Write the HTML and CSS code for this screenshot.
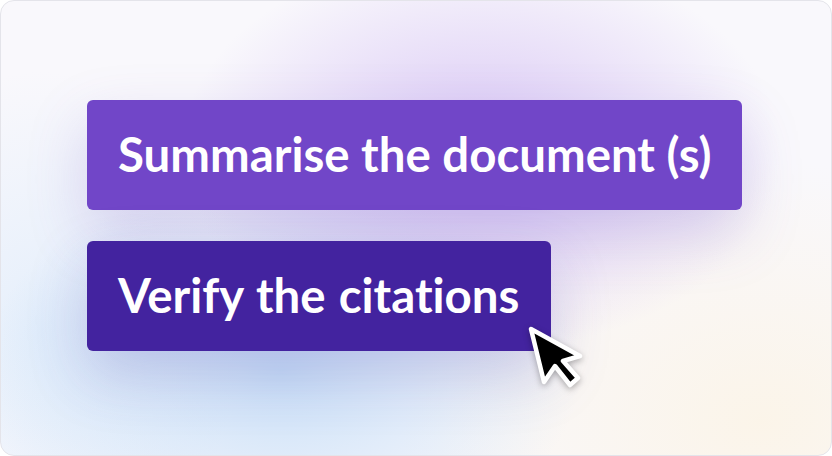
FILE: index.html
```html
<!DOCTYPE html>
<html>
<head>
<meta charset="utf-8">
<link rel="stylesheet" href="styles.css">
</head>
<body>
<div class="card">
  <div class="actions">
    <div class="btn btn-primary">Summarise the document (s)</div>
    <div class="btn btn-dark">Verify the citations</div>
  </div>
  <svg class="cursor" width="66" height="72" viewBox="0 0 66 72">
    <path d="M9 9 L22 62 L33 46 L48 65 L56 58 L41 41 L58 36 Z" fill="#000" stroke="#fff" stroke-width="4.5" stroke-linejoin="round"/>
  </svg>
</div>
</body>
</html>
```
FILE: styles.css
```css
html, body {
  margin: 0;
  padding: 0;
  width: 832px;
  height: 456px;
  background: #ffffff;
  overflow: hidden;
}
.card {
  position: relative;
  box-sizing: border-box;
  width: 832px;
  height: 456px;
  border: 1px solid #e4e4ea;
  border-radius: 14px;
  overflow: hidden;
  background:
    radial-gradient(ellipse 300px 200px at 480px 150px, rgba(195,165,240,0.6), rgba(195,165,240,0) 100%),
    radial-gradient(ellipse 300px 190px at 280px 370px, rgba(170,208,245,0.6), rgba(170,208,245,0) 100%),
    radial-gradient(ellipse 200px 260px at 40px 330px, rgba(205,228,250,0.45), rgba(205,228,250,0) 100%),
    radial-gradient(ellipse 360px 260px at 760px 420px, rgba(252,243,225,0.7), rgba(252,243,225,0) 100%),
    #f9f8fc;
  padding: 99px 0 0 86px;
}
.actions {
  display: flex;
  flex-direction: column;
  align-items: flex-start;
  gap: 31px;
}
.btn {
  box-sizing: border-box;
  height: 110px;
  display: flex;
  align-items: center;
  padding: 0 31px 4px 31px;
  border-radius: 6px;
  color: #ffffff;
  font-family: Lato, "Open Sans", sans-serif;
  font-weight: 700;
  font-size: 47.4px;
  letter-spacing: 0;
  font-variant-ligatures: none;
  font-feature-settings: "liga" 0, "dlig" 0;
  white-space: nowrap;
}
.btn-primary {
  background: #7146c8;
  box-shadow: 0 24px 60px rgba(110, 80, 190, 0.22);
}
.btn-dark {
  background: #43239f;
  box-shadow: 0 24px 60px rgba(70, 60, 170, 0.22);
  word-spacing: 1.5px;
  padding-right: 32px;
}
.cursor {
  position: absolute;
  left: 521px;
  top: 319px;
  filter: drop-shadow(0 2px 3px rgba(0,0,0,0.3));
}
```
